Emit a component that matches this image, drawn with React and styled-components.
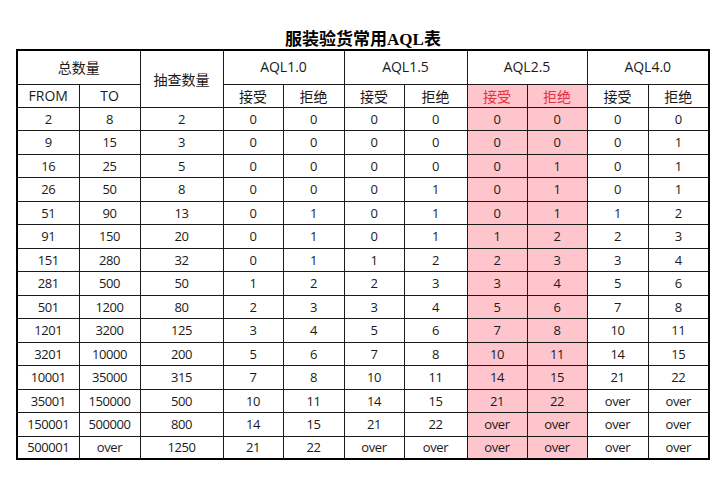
import React from "react";
import styled, { createGlobalStyle, css } from "styled-components";

const Global = createGlobalStyle`
  html, body { margin: 0; padding: 0; background: #fff; }
  body { font-family: "Open Sans", "Noto Sans CJK SC", sans-serif; color: #111; }
`;

const Page = styled.div`
  width: 728px;
  height: 478px;
  padding: 26px 0 0 16px;
  box-sizing: border-box;
  display: flex;
  flex-direction: column;
`;

const Title = styled.h1`
  margin: 0;
  width: 694px;
  height: 23px;
  line-height: 23px;
  text-align: center;
  font-family: "Noto Sans CJK SC", sans-serif;
  font-weight: 700;
  font-size: 17px;
  color: #000;
`;

const Latin = styled.span`
  font-family: "Liberation Serif", serif;
  font-weight: 700;
  font-size: 17px;
`;

const Table = styled.table`
  border-collapse: collapse;
  table-layout: fixed;
  width: 692px;
  border: 2px solid #000;
`;

const Col = styled.col`
  width: ${(p) => p.$w}px;
`;

const cellBase = css`
  box-sizing: border-box;
  border: 1px solid #1a1a1a;
  padding: 0;
  text-align: center;
  vertical-align: middle;
  height: ${(p) => p.$h || 23}px;
  line-height: 16px;
  font-weight: 400;
  white-space: nowrap;
  background: ${(p) => (p.$hl ? "#ffc5cd" : "#fff")};
  color: ${(p) => (p.$red ? "#e5323e" : "#1a1a1a")};
`;

const HeadCell = styled.th`
  ${cellBase}
  font-family: ${(p) =>
    p.$cjk ? '"Noto Sans CJK SC", sans-serif' : '"Open Sans", "Noto Sans CJK SC", sans-serif'};
  font-size: 14px;
`;

const Cell = styled.td`
  ${cellBase}
  font-family: "Open Sans", "Noto Sans CJK SC", sans-serif;
  font-size: 13px;
  letter-spacing: -0.4px;
`;

const widths = [62, 61, 83, 60, 61, 60, 63, 60, 60, 61, 61];

const rows = [
  ["2", "8", "2", "0", "0", "0", "0", "0", "0", "0", "0"],
  ["9", "15", "3", "0", "0", "0", "0", "0", "0", "0", "1"],
  ["16", "25", "5", "0", "0", "0", "0", "0", "1", "0", "1"],
  ["26", "50", "8", "0", "0", "0", "1", "0", "1", "0", "1"],
  ["51", "90", "13", "0", "1", "0", "1", "0", "1", "1", "2"],
  ["91", "150", "20", "0", "1", "0", "1", "1", "2", "2", "3"],
  ["151", "280", "32", "0", "1", "1", "2", "2", "3", "3", "4"],
  ["281", "500", "50", "1", "2", "2", "3", "3", "4", "5", "6"],
  ["501", "1200", "80", "2", "3", "3", "4", "5", "6", "7", "8"],
  ["1201", "3200", "125", "3", "4", "5", "6", "7", "8", "10", "11"],
  ["3201", "10000", "200", "5", "6", "7", "8", "10", "11", "14", "15"],
  ["10001", "35000", "315", "7", "8", "10", "11", "14", "15", "21", "22"],
  ["35001", "150000", "500", "10", "11", "14", "15", "21", "22", "over", "over"],
  ["150001", "500000", "800", "14", "15", "21", "22", "over", "over", "over", "over"],
  ["500001", "over", "1250", "21", "22", "over", "over", "over", "over", "over", "over"],
];

const levels = ["AQL1.0", "AQL1.5", "AQL2.5", "AQL4.0"];
const hlCols = new Set([7, 8]);
const rowHeights = [23, 24, 23, 24, 23, 24, 23, 24, 23, 24, 23, 24, 23, 24, 23];

export default function App() {
  return (
    <>
      <Global />
      <Page>
        <Title>
          服装验货常用<Latin>AQL</Latin>表
        </Title>
        <Table>
          <colgroup>
            {widths.map((w, i) => (
              <Col key={i} $w={w} />
            ))}
          </colgroup>
          <thead>
            <tr>
              <HeadCell colSpan={2} $cjk $h={34}>
                总数量
              </HeadCell>
              <HeadCell rowSpan={2} $cjk>
                抽查数量
              </HeadCell>
              {levels.map((l) => (
                <HeadCell key={l} colSpan={2} $h={34}>
                  {l}
                </HeadCell>
              ))}
            </tr>
            <tr>
              <HeadCell $h={23}>FROM</HeadCell>
              <HeadCell $h={23}>TO</HeadCell>
              {levels.flatMap((l, i) => [
                <HeadCell key={l + "a"} $cjk $h={23} $hl={i === 2} $red={i === 2}>
                  接受
                </HeadCell>,
                <HeadCell key={l + "r"} $cjk $h={23} $hl={i === 2} $red={i === 2}>
                  拒绝
                </HeadCell>,
              ])}
            </tr>
          </thead>
          <tbody>
            {rows.map((r, ri) => (
              <tr key={ri}>
                {r.map((v, ci) => (
                  <Cell key={ci} $h={rowHeights[ri]} $hl={hlCols.has(ci)}>
                    {v}
                  </Cell>
                ))}
              </tr>
            ))}
          </tbody>
        </Table>
      </Page>
    </>
  );
}
